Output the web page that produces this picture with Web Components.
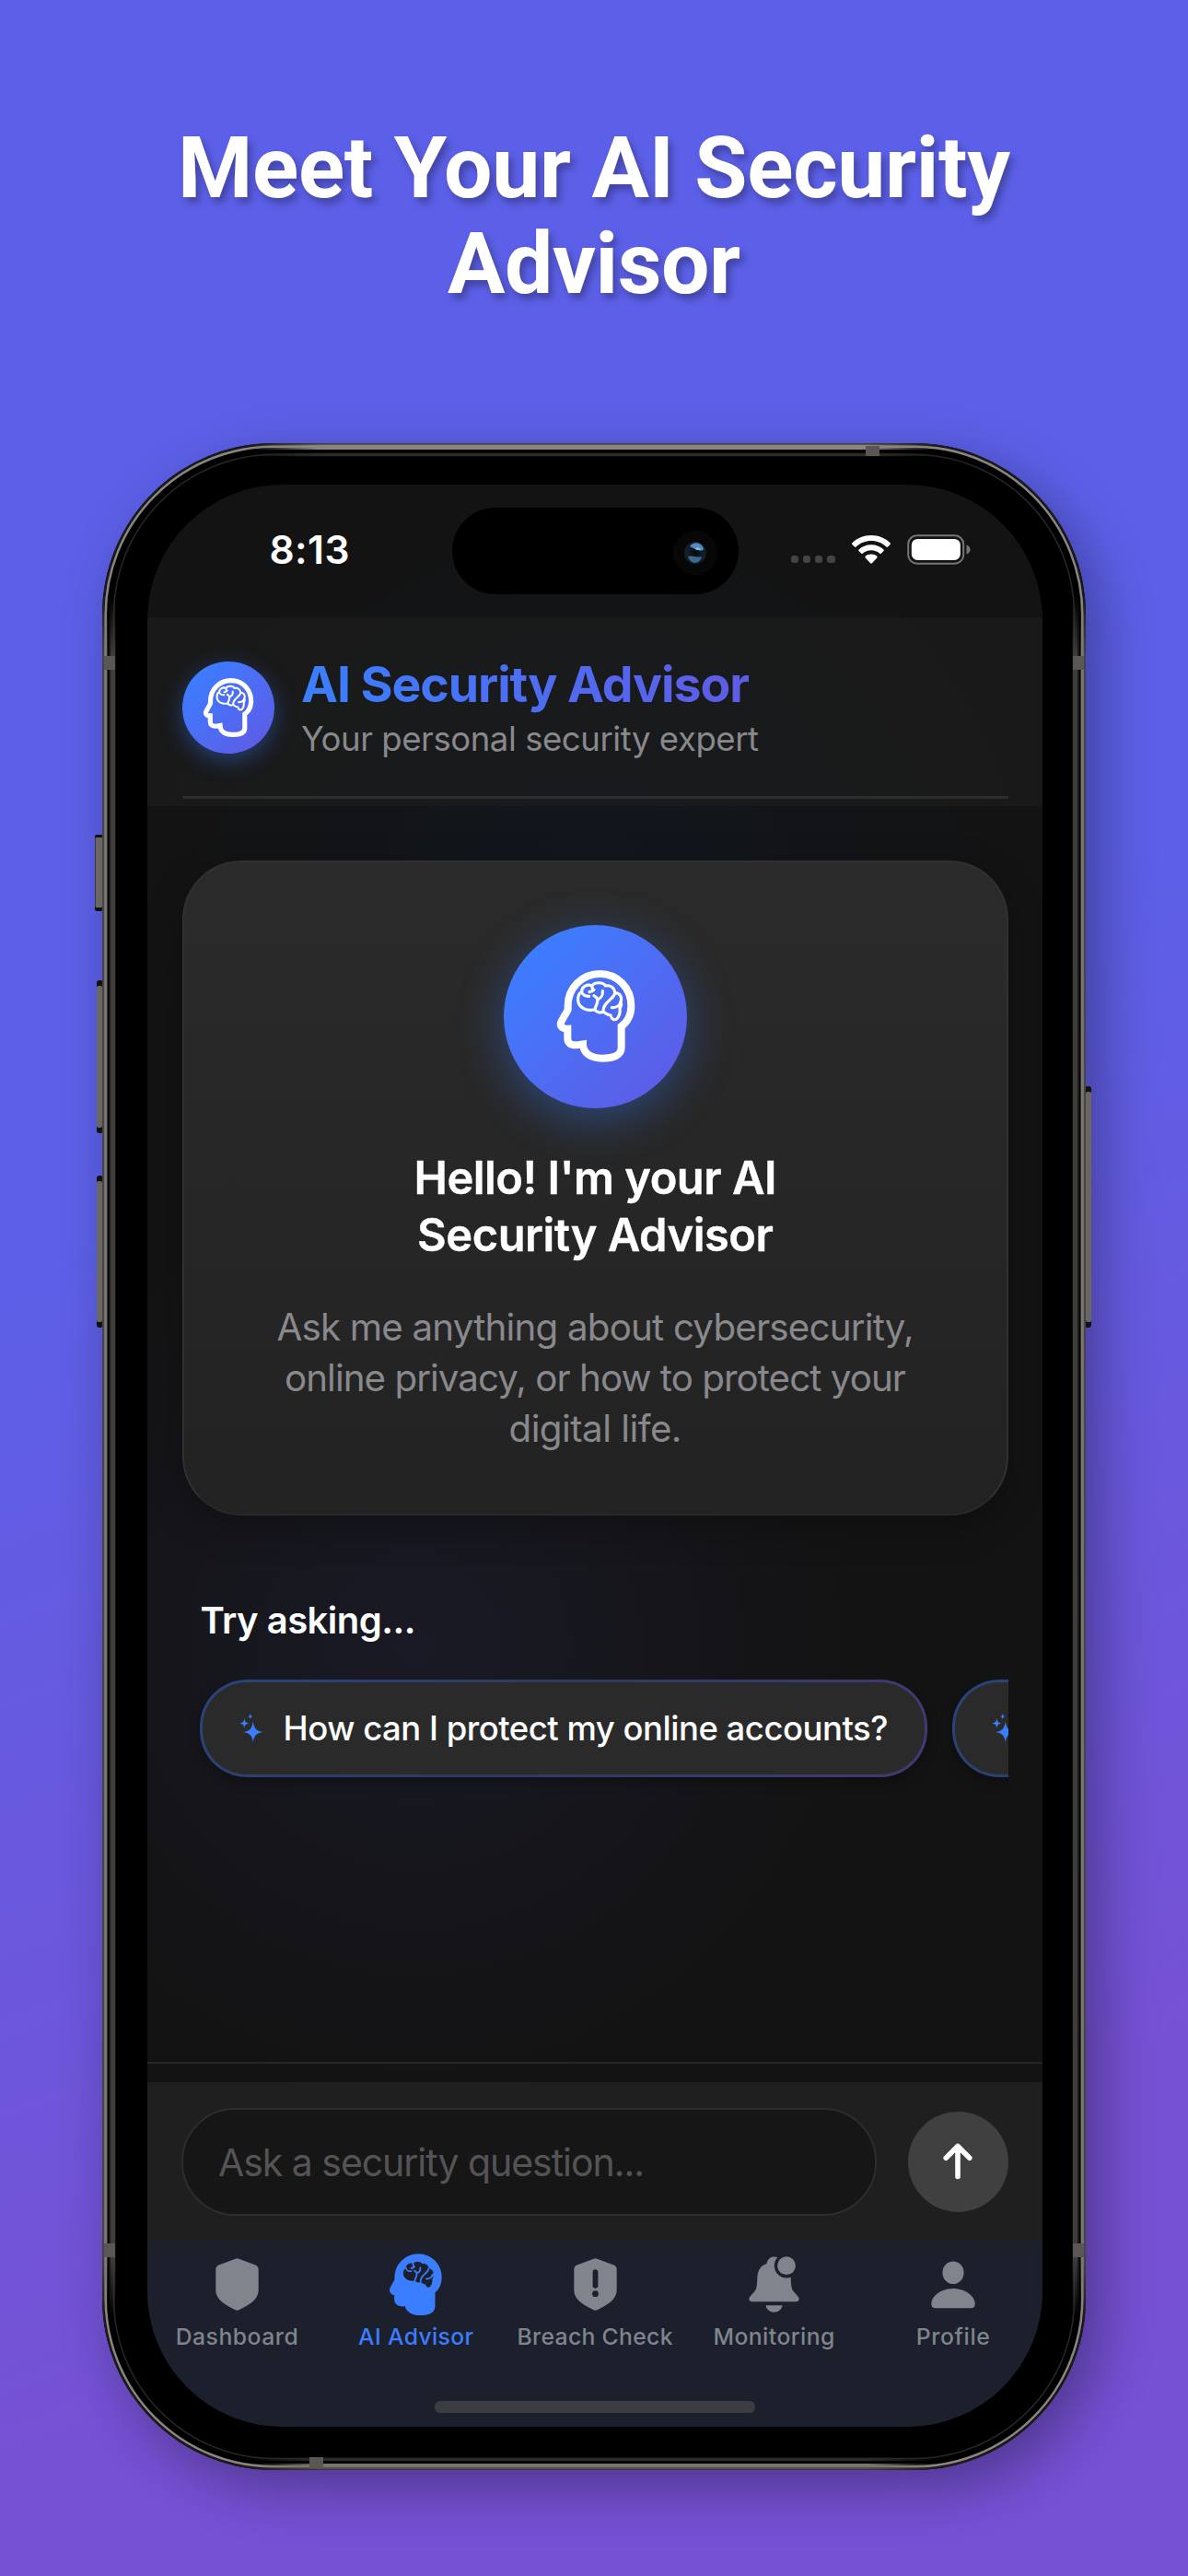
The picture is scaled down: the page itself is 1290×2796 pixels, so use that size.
<!DOCTYPE html>
<html lang="en">
<head>
<meta charset="utf-8">
<title>AI Security Advisor</title>
<style>
  html, body { margin: 0; padding: 0; }
  body { width: 1290px; height: 2796px; overflow: hidden; font-family: Inter, "Liberation Sans", sans-serif; color: #fff; }
</style>
</head>
<body>
<promo-page>
  <span slot="title"><fit-line w="904">Meet Your AI Security</fit-line><br><fit-line w="318">Advisor</fit-line></span>
  <phone-frame>
    <status-bar></status-bar>
    <advisor-header></advisor-header>
    <chat-area>
      <welcome-card></welcome-card>
      <prompt-suggestions></prompt-suggestions>
    </chat-area>
    <question-bar></question-bar>
    <tab-bar></tab-bar>
  </phone-frame>
</promo-page>

<script>
const define = (name, html, setup) => customElements.define(name, class extends HTMLElement {
  constructor() {
    super();
    this.attachShadow({ mode: 'open' }).innerHTML = html;
  }
  connectedCallback() { if (setup) setup.call(this, this.shadowRoot); }
});

/* Shared head-and-brain artwork: skull contour, brain contour and its folds. */
const HEAD = 'M288 340C288 282 334 236 392 236S494 282 494 340C494 370 484 391 462 407V477C462 500 438 511 400 511C360 511 337 492 337 465L316 468C296 469 287 460 287 446V415C272 416 262 408 264.500 397C267 388 284 362 288 352Z';
const BRAIN = 'M333 294C333 277 351 268 367 275C374 262 403 262 410 275C426 271 440 282 441 298C457 298 466 312 460 326C464 336 461 343 457 348C459 360 455 374 448 382C440 389 430 384 427 371C418 369 409 366 404 358C395 365 381 362 375 352C350 359 322 346 321 322C320 309 325 299 333 294Z';
const FOLDS = 'M333 294C334 304 345 310 357 309M367 275C366 283 369 287 373 288C370 292 364 294 358 295M373 307C378 309 382 313 384 319M401 292C403 306 394 316 384 319C388 330 378 338 376 352M441 298C440 318 402 328 403 357M460 326C457 340 444 347 431 346';

define('brain-icon', `
<style>
  :host { display: block; width: 84px; height: 99.700px; }
  svg { display: block; width: 100%; height: 100%; overflow: visible; fill: none; stroke-linejoin: round; stroke-linecap: round; }
</style>
<div></div>`, function (root) {
  const filled = this.hasAttribute('filled');
  root.querySelector('div').style.cssText = 'width:100%;height:100%';
  root.querySelector('div').innerHTML = filled
    ? `<svg viewBox="253 224 252 299"><path d="${HEAD}" fill="#3b7dff" stroke="#3b7dff" stroke-width="22"/><path d="${BRAIN}" fill="#1b202c" stroke="#1b202c" stroke-width="4"/><path d="${FOLDS}" stroke="#3b7dff" stroke-width="8"/></svg>`
    : `<svg viewBox="253 224 252 299"><path d="${HEAD}" stroke="#fff" stroke-width="24" stroke-linejoin="miter"/><path d="${BRAIN}${FOLDS}" stroke="#fff" stroke-width="9.500"/></svg>`;
});

define('advisor-avatar', `
<style>
  :host { display: flex; align-items: center; justify-content: center; border-radius: 50%; flex: none;
    background: linear-gradient(135deg, #3d7cff 15%, #5e5ce6 90%); }
</style><slot></slot>`);

define('promo-page', `
<style>
  :host { display: flex; flex-direction: column; align-items: center; width: 1290px; height: 2796px;
    background: linear-gradient(160deg, #5c60e8 42%, #7651d4 82%); }
  h1 { margin: 131px 0 142px; height: 208px; font: 700 93px/104px Roboto, sans-serif; text-align: center; color: #fff;
    text-shadow: 4px 6px 8px rgba(0,0,0,.3); }
</style>
<h1><slot name="title"></slot></h1>
<slot></slot>`);

define('phone-frame', `
<style>
  :host { display: flex; position: relative; width: 1068px; height: 2200px; box-sizing: border-box; padding: 45px 47px 47px 49px;
    border-radius: 186px; background: #000; box-shadow: 16px 20px 60px rgba(0,0,0,.32); }
  svg { position: absolute; left: -10px; top: 0; width: 1088px; height: 2200px; pointer-events: none; overflow: visible; }
  .screen { position: relative; width: 972px; height: 2108px; border-radius: 147px; overflow: hidden; display: flex; flex-direction: column;
    background:
      radial-gradient(circle 480px at 480px 470px, rgba(17,28,44,.5), rgba(17,24,36,.3) 50%, transparent 100%),
      radial-gradient(circle 500px at 290px 1260px, rgba(32,32,56,.5), rgba(28,28,48,.3) 50%, transparent 100%),
      #131313; }
</style>
<svg viewBox="-10 0 1088 2200">
  <defs>
    <linearGradient id="gy" gradientUnits="userSpaceOnUse" x1="0" y1="0" x2="0" y2="2200"><stop offset=".075" stop-color="#000"/><stop offset=".105" stop-color="#fff"/><stop offset=".895" stop-color="#fff"/><stop offset=".925" stop-color="#000"/></linearGradient>
    <linearGradient id="gx" gradientUnits="userSpaceOnUse" x1="0" y1="0" x2="1068" y2="0"><stop offset=".15" stop-color="#000"/><stop offset=".22" stop-color="#fff"/><stop offset=".78" stop-color="#fff"/><stop offset=".85" stop-color="#000"/></linearGradient>
    <mask id="my" maskUnits="userSpaceOnUse" x="-10" y="0" width="1088" height="2200"><path fill="url(#gy)" d="M-10 0H1078V2200H-10Z"/></mask>
    <mask id="mx" maskUnits="userSpaceOnUse" x="-10" y="0" width="1088" height="2200"><path fill="url(#gx)" d="M-10 0H1078V2200H-10Z"/></mask>
  </defs>
  <g fill="#6b6662">
    <rect x="-8" y="425" width="9" height="83" rx="2" fill="#111"/><rect x="-7.500" y="428" width="8" height="76" rx="1"/>
    <rect x="-6" y="583" width="7" height="166" rx="3" fill="#111"/><rect x="-6" y="589" width="6" height="154" rx="2"/>
    <rect x="-6" y="795" width="7" height="165" rx="3" fill="#111"/><rect x="-6" y="801" width="6" height="153" rx="2"/>
    <rect x="1067" y="698" width="7" height="262" rx="3" fill="#111"/><rect x="1068" y="704" width="6" height="250" rx="2"/>
  </g>
  <g fill="none">
    <rect x="1" y="1" width="1066" height="2198" rx="185" stroke="#1c1b1a" stroke-width="2"/>
    <rect x="3.700" y="3.700" width="1060.600" height="2192.600" rx="182.300" stroke="#8a8580" stroke-width="2.600"/>
    <rect x="12.500" y="12.500" width="1043" height="2175" rx="173.500" stroke="#262424" stroke-width="1.600"/>
  </g>
  <g mask="url(#my)">
    <path d="M1 150V2050M1067 150V2050" stroke="#474543" stroke-width="2"/>
    <path d="M3.800 150V2050M1064.200 150V2050" stroke="#7a7672" stroke-width="3.300"/>
    <path d="M11.500 150V2050M1056.500 150V2050" stroke="#3f3c3a" stroke-width="5.500"/>
    <path d="M8 150V2050M1060 150V2050" stroke="#1c1b1b" stroke-width="2"/>
  </g>
  <g mask="url(#mx)">
    <path d="M150 1.200H920M150 2198.500H920" stroke="#55524f" stroke-width="2"/>
    <path d="M150 4.600H920" stroke="#8a8580" stroke-width="5"/>
    <path d="M150 2195H920" stroke="#78746f" stroke-width="4"/>
    <path d="M150 12.500H920M150 2188.500H920" stroke="#2d2b2a" stroke-width="3.500"/>
  </g>
  <path fill="#5a5653" d="M2 231h12v15H2zM1054 231h12v15h-12zM2 1954h12v15H2zM1054 1954h12v15h-12zM829 3h15v11h-15zM225 2186h15v12h-15z"/>
</svg>
<div class="screen"><slot></slot></div>`);

define('status-bar', `
<style>
  :host { display: flex; align-items: center; height: 140px; margin-bottom: 4px; flex: none; }
  .time { width: 90px; margin-left: 132.500px; font-weight: 600; font-size: 42.500px; line-height: 50px; padding-top: 1px; }
  .island { width: 311px; height: 94px; border-radius: 47px; background: #000; margin: 4px 0 0 108.500px; display: flex; align-items: center; justify-content: flex-end; }
  .island svg { margin-right: 22px; margin-top: 4px; }
  .dots { display: flex; gap: 5px; margin: 22px 0 0 56.500px; }
  .dots i { width: 8.300px; height: 8.600px; border-radius: 3px; background: #444; }
  .wifi { margin-left: 18px; }
  .battery { margin-left: 18px; }
  svg { display: block; flex: none; }
</style>
<span class="time"><fit-line w="87">8:13</fit-line></span>
<span class="island"><svg width="50" height="50" viewBox="-25 -25 50 50">
  <defs><radialGradient id="l"><stop offset="0" stop-color="#05080c"/><stop offset=".7" stop-color="#10202e"/><stop offset="1" stop-color="#1a1c1e"/></radialGradient></defs>
  <circle r="24" fill="#070707"/><circle r="12" fill="url(#l)"/>
  <path d="M-6 -7C-2 -13 7 -12 9 -4C7 -1 4 -3 0 -4Z" fill="#5a86c8"/><path d="M0 -5C3 -7 6 -5 6 -3L1 -3Z" fill="#58d0dc"/>
  <path d="M-8 4C-4 2 2 6 7 4C6 11 -4 15 -8 4Z" fill="#3b6a8c"/></svg></span>
<span class="dots"><i></i><i></i><i></i><i></i></span>
<svg class="wifi" width="42" height="31" viewBox="0 0 42 31" fill="#fff">
  <path d="M21 0C29.200 0 36.600 3.200 41.600 8.300C42.100 8.800 42.100 9.400 41.600 9.900L39 12.500C38.500 13 37.900 13 37.400 12.500C33 8.400 27.300 6.100 21 6.100S9 8.400 4.600 12.500C4.100 13 3.500 13 3 12.500L.4 9.900C-.1 9.400-.1 8.800 .4 8.300C5.400 3.200 12.800 0 21 0Z"/>
  <path d="M21 10.300C26.300 10.300 31.100 12.300 34.500 15.500C35 16 35 16.600 34.500 17.100L31.800 19.700C31.300 20.200 30.800 20.200 30.300 19.700C27.800 17.500 24.600 16.300 21 16.300S14.200 17.500 11.700 19.700C11.200 20.200 10.700 20.200 10.200 19.700L7.500 17.100C7 16.600 7 16 7.500 15.500C10.900 12.300 15.700 10.300 21 10.300Z"/>
  <path d="M21 20.500C23.500 20.500 25.700 21.400 27.300 22.800C27.800 23.300 27.800 23.900 27.300 24.400L21.900 30.300C21.400 30.800 20.600 30.800 20.100 30.300L14.700 24.400C14.200 23.900 14.200 23.300 14.700 22.800C16.300 21.400 18.500 20.500 21 20.500Z"/>
</svg>
<svg class="battery" width="69" height="33" viewBox="0 0 69 33">
  <rect x="1.200" y="1.200" width="60" height="30.500" rx="9.500" fill="none" stroke="#757575" stroke-width="2"/>
  <rect x="4.800" y="4.900" width="53" height="23" rx="6.500" fill="#fff"/>
  <path d="M64.500 11.500C67 12.300 68.500 14.300 68.500 16.500S67 20.700 64.500 21.500Z" fill="#757575"/>
</svg>`);

define('advisor-header', `
<style>
  :host { display: flex; flex-direction: column; height: 205px; box-sizing: border-box; flex: none; padding: 41px 37px 0 38px; background: rgba(31,31,31,.55); }
  .row { display: flex; height: 153px; }
  advisor-avatar { width: 99.500px; height: 99.500px; margin-top: 7px; margin-right: 29.500px; box-shadow: 0 7px 24px rgba(58,123,255,.4); }
  brain-icon { width: 54px; height: 64px; }
  .title { font-size: 53.600px; line-height: 64px; font-weight: 700; height: 64px; }
  .title fit-line { background: linear-gradient(90deg, #3b7fff, #5e5ce6); background-clip: text; -webkit-background-clip: text; color: transparent; }
  .sub { font-size: 36.500px; line-height: 55px; color: #89898d; }
  .rule { height: 2.500px; background: #2c2d2e; }
</style>
<div class="row">
  <advisor-avatar><brain-icon></brain-icon></advisor-avatar>
  <div>
    <div class="title"><fit-line w="487">AI Security Advisor</fit-line></div>
    <div class="sub"><fit-line w="497">Your personal security expert</fit-line></div>
  </div>
</div>
<div class="rule"></div>`);

define('chat-area', `
<style>
  :host { display: flex; flex-direction: column; height: 1364.500px; flex: none; box-sizing: border-box; padding: 58.700px 37px 0 38px; border-bottom: 2.500px solid #25262a; }
</style><slot></slot>`);

define('welcome-card', `
<style>
  :host { display: flex; flex-direction: column; align-items: center; height: 711px; box-sizing: border-box; padding-top: 68px;
    border: 2px solid #303030; border-bottom-color: #292929; border-radius: 64px; background: linear-gradient(#2b2b2b, #222); box-shadow: 0 12px 40px rgba(0,0,0,.28); text-align: center; }
  advisor-avatar { width: 199px; height: 199px; box-shadow: 0 12px 50px rgba(58,123,255,.4); }
  .hello { margin-top: 45px; font-size: 48.800px; line-height: 62px; font-weight: 600; -webkit-text-stroke: .4px #fff; }
  .about { margin-top: 42.500px; font-size: 40.300px; line-height: 54.800px; color: #89898d; }
</style>
<advisor-avatar><brain-icon></brain-icon></advisor-avatar>
<div class="hello"><fit-line w="394">Hello! I'm your AI</fit-line><br><fit-line w="387">Security Advisor</fit-line></div>
<div class="about"><fit-line w="692">Ask me anything about cybersecurity,</fit-line><br><fit-line w="675">online privacy, or how to protect your</fit-line><br><fit-line w="188">digital life.</fit-line></div>`);

define('prompt-chip', `
<style>
  :host { display: flex; align-items: center; flex: none; width: 790px; height: 106.500px; box-sizing: border-box; padding-left: 40px;
    border: 3px solid transparent; border-radius: 51px; font-weight: 500; font-size: 36.500px; line-height: 46px;
    background: linear-gradient(#2a2a2a, #2a2a2a) padding-box, linear-gradient(135deg, #28457a, #2e3963 45%, #423a76) border-box;
    box-shadow: 0 5px 14px rgba(0,0,0,.3); }
  svg { margin-right: 21.500px; flex: none; }
</style>
<svg width="26" height="31" viewBox="0 0 26 31" fill="#3b7dff">
  <path d="M14.800 8.500C16 16 17.500 18.500 26 20C17.500 21.500 16 24 14.800 31C13.500 24 12 21.500 4 20C12 18.500 13.500 16 14.800 8.500Z"/>
  <path d="M5.400 5C6 9 6.700 9.700 10.600 10.500C6.700 11.300 6 12 5.400 16C4.700 12 4 11.300 0 10.500C4 9.700 4.700 9 5.400 5Z"/>
  <path d="M11.800 0C12.200 2.200 12.700 2.700 14.900 3.100C12.700 3.500 12.200 4 11.800 6.200C11.400 4 10.900 3.500 8.700 3.100C10.900 2.700 11.400 2.200 11.800 0Z"/>
</svg><slot></slot>`);

define('prompt-suggestions', `
<style>
  :host { display: block; margin-top: 89.500px; }
  .label { padding-left: 19.500px; font-size: 40px; line-height: 50px; font-weight: 600; }
  .list { display: flex; gap: 27px; margin-top: 38.500px; padding: 0 0 30px 19px; overflow: hidden; }
</style>
<div class="label"><fit-line w="234">Try asking...</fit-line></div>
<div class="list"><prompt-chip><fit-line w="657">How can I protect my online accounts?</fit-line></prompt-chip><prompt-chip></prompt-chip></div>`);

define('question-bar', `
<style>
  :host { display: flex; align-items: center; justify-content: space-between; flex: none; margin-top: 20px; height: 173.500px; box-sizing: border-box; padding: 0 37px 0 37px; background: #1f1f1f; }
  .field { width: 755px; height: 117px; box-sizing: border-box; border: 2.500px solid #2d2d2d; border-radius: 58px; background: #161616; padding-left: 38px;
    font-size: 41px; line-height: 115px; color: #545456; }
  .send { width: 109.500px; height: 109.500px; border-radius: 50%; background: #404040; display: flex; align-items: center; justify-content: center; }
</style>
<div class="field"><fit-line w="463">Ask a security question...</fit-line></div>
<div class="send"><svg width="34" height="42" viewBox="0 0 34 42" fill="none" stroke="#fff" stroke-width="5.600" stroke-linecap="round" stroke-linejoin="round"><path d="M17 4.500V37.500M4.200 17.300L17 4.500L29.800 17.300"/></svg></div>`);

define('tab-item', `
<style>
  :host { display: flex; flex-direction: column; align-items: center; flex: 1 1 0; color: #80848d; font-weight: 500; font-size: 24.700px; line-height: 30px; }
  :host([active]) { color: #3b7dff; }
  .icon { height: 70px; display: flex; align-items: center; margin-bottom: 6.800px; }
</style>
<div class="icon"><slot name="icon"></slot></div><slot></slot>`);

define('tab-bar', `
<style>
  :host { display: flex; flex-direction: column; align-items: center; flex: 1; background: #1b202c; padding-top: 11.700px; }
  nav { display: flex; align-self: stretch; }
  .home { width: 348px; height: 12.400px; border-radius: 6.200px; background: #3b3d40; margin-top: 55px; }
  svg { display: block; fill: #80848d; }
  brain-icon { width: 56.700px; height: 67.300px; }
</style>
<nav>
  <tab-item><svg slot="icon" width="47" height="57" viewBox="0 0 47 57"><path d="M21 .9Q23.500-.3 26 .9L43.500 7.500Q46.700 8.800 46.700 12.500V35C46.700 45 36 51 26 56Q23.500 57.300 21 56C11 51 .3 45 .3 35V12.500Q.3 8.800 3.500 7.500Z"/></svg><fit-line w="133">Dashboard</fit-line></tab-item>
  <tab-item active><brain-icon slot="icon" filled></brain-icon><fit-line w="125">AI Advisor</fit-line></tab-item>
  <tab-item><svg slot="icon" width="47" height="57" viewBox="0 0 47 57"><path d="M21 .9Q23.500-.3 26 .9L43.500 7.500Q46.700 8.800 46.700 12.500V35C46.700 45 36 51 26 56Q23.500 57.300 21 56C11 51 .3 45 .3 35V12.500Q.3 8.800 3.500 7.500Z"/><path d="M23.500 15.200V29.800" stroke="#1b202c" stroke-width="5.800" stroke-linecap="round"/><circle cx="23.500" cy="38.700" r="3.400" fill="#1b202c"/></svg><fit-line w="169">Breach Check</fit-line></tab-item>
  <tab-item><svg slot="icon" width="55" height="61" viewBox="0 0 55 61"><path d="M19.500 8C20.500 3 23.500 .4 27.500 .4C36 .4 35 8 36 8C43 11 45.500 16 45.700 24C46 32 46.500 36 49 38.500L53 43C56 46.500 54.500 49.300 51 49.300H4C.5 49.300-1 46.500 2 43L6 38.500C8.500 36 9 32 9.300 24C9.500 16 12.500 10 19.500 8Z"/><path d="M18.500 53.300H36.500C35.500 58 32 60.700 27.500 60.700S19.500 58 18.500 53.300Z"/><circle cx="41" cy="10.200" r="13.200" fill="#1b202c"/><circle cx="41" cy="10.200" r="9.900"/></svg><fit-line w="132">Monitoring</fit-line></tab-item>
  <tab-item><svg slot="icon" width="48" height="52" viewBox="0 0 48 52"><ellipse cx="24" cy="12.700" rx="11.600" ry="12.300"/><path d="M24 30C38 30 47.700 39 47.700 46.500Q47.700 51.300 43.500 51.300H4.500Q.3 51.300 .3 46.500C.3 39 10 30 24 30Z"/></svg><fit-line w="80">Profile</fit-line></tab-item>
</nav>
<div class="home"></div>`);

/* Line of text whose tracking is adjusted so that it fills the width given in "w".
   Registered last: it measures itself, so its surroundings must already be styled. */
define('fit-line', `<style>:host{display:inline-block;white-space:nowrap}</style><slot></slot>`, function () {
  const target = parseFloat(this.getAttribute('w'));
  const n = this.textContent.length;
  this.style.letterSpacing = '0';
  const natural = this.getBoundingClientRect().width;
  if (!natural || !target) return;
  const ls = (target - natural) / (n - 1);
  this.style.letterSpacing = ls + 'px';
  this.style.marginRight = -ls + 'px';
});
</script>
</body>
</html>
